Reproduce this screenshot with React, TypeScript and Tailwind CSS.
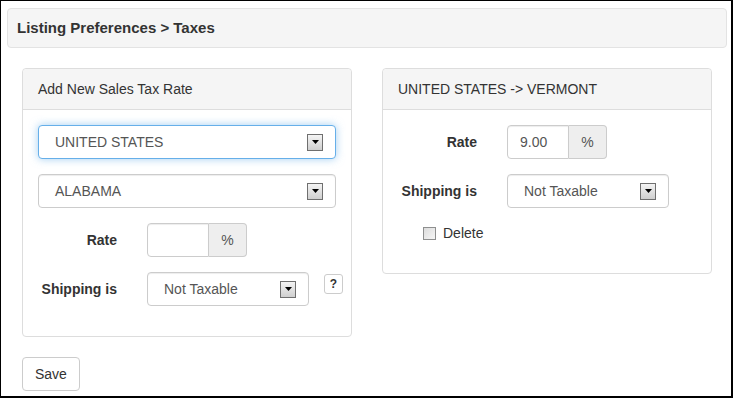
import React from 'react';

function ArrowBox() {
  return (
    <span className="flex h-[17px] w-[16px] items-center justify-center border border-[#6f6f6f] bg-gradient-to-b from-[#f4f4f4] to-[#cfcfcf]">
      <svg width="7" height="4" viewBox="0 0 7 4">
        <path d="M0 0 L7 0 L3.5 4 Z" fill="#000" />
      </svg>
    </span>
  );
}

interface SelectBoxProps {
  value: string;
  focused?: boolean;
  className?: string;
}

function SelectBox({ value, focused, className = '' }: SelectBoxProps) {
  return (
    <div
      className={`flex h-[34px] shrink-0 items-center justify-between rounded-[4px] border bg-white pl-[16px] pr-[12px] text-[14px] text-[#555] ${
        focused
          ? 'border-[#66afe9] shadow-[0_0_8px_rgba(102,175,233,0.6)]'
          : 'border-[#ccc] shadow-[inset_0_1px_1px_rgba(0,0,0,0.075)]'
      } ${className}`}
    >
      <span>{value}</span>
      <ArrowBox />
    </div>
  );
}

function RateInput({ value }: { value: string }) {
  return (
    <div className="flex h-[34px] w-[100px] shrink-0 text-[14px]">
      <div className="flex w-[62px] items-center rounded-l-[4px] border border-[#ccc] bg-white px-[12px] text-[#555] shadow-[inset_0_1px_1px_rgba(0,0,0,0.075)]">
        {value}
      </div>
      <div className="flex w-[38px] items-center justify-center rounded-r-[4px] border border-l-0 border-[#ccc] bg-[#eee] text-[#555]">
        %
      </div>
    </div>
  );
}

function FormRow({ label, children }: { label: string; children: React.ReactNode }) {
  return (
    <div className="flex items-start gap-[30px]">
      <label className="flex h-[34px] w-[79px] shrink-0 items-center justify-end whitespace-nowrap font-bold text-[#333]">
        {label}
      </label>
      {children}
    </div>
  );
}

export default function App() {
  return (
    <div className="h-[398px] w-[733px] overflow-hidden border border-r-2 border-b-2 border-black bg-white font-['Liberation_Sans',Arial,sans-serif] text-[14px] leading-[20px] text-[#333]">
      <div className="ml-[6px] mt-[7px] w-[720px] rounded-[4px] border border-[#e3e3e3] bg-[#f5f5f5] px-[9px] py-[9px] text-[15px] font-bold">
        Listing Preferences &gt; Taxes
      </div>

      <div className="mt-[20px] grid grid-cols-[330px_330px] gap-[30px] pl-[21px]">
        <div className="self-start rounded-[4px] border border-[#ddd]">
          <div className="rounded-t-[4px] border-b border-[#ddd] bg-[#f5f5f5] px-[15px] py-[10px]">
            Add New Sales Tax Rate
          </div>
          <div className="flex flex-col gap-[15px] px-[15px] pt-[15px] pb-[30px]">
            <SelectBox value="UNITED STATES" focused />
            <SelectBox value="ALABAMA" />
            <FormRow label="Rate">
              <RateInput value="" />
            </FormRow>
            <FormRow label="Shipping is">
              <div className="flex shrink-0 items-start gap-[15px]">
                <SelectBox value="Not Taxable" className="w-[162px]" />
                <button className="mt-[2px] flex h-[20px] w-[19px] items-center justify-center rounded-[3px] border border-[#ccc] bg-white text-[12px] font-bold text-[#333]">
                  ?
                </button>
              </div>
            </FormRow>
          </div>
        </div>

        <div className="self-start rounded-[4px] border border-[#ddd]">
          <div className="rounded-t-[4px] border-b border-[#ddd] bg-[#f5f5f5] px-[15px] py-[10px]">
            UNITED STATES -&gt; VERMONT
          </div>
          <div className="flex flex-col gap-[15px] px-[15px] pt-[15px] pb-[30px]">
            <FormRow label="Rate">
              <RateInput value="9.00" />
            </FormRow>
            <FormRow label="Shipping is">
              <SelectBox value="Not Taxable" className="w-[162px]" />
            </FormRow>
            <label className="ml-[25px] flex h-[20px] items-center gap-[7px]">
              <span className="h-[13px] w-[13px] border border-[#8e8f8f] bg-gradient-to-br from-[#dcdcdc] to-[#f6f6f6]" />
              <span>Delete</span>
            </label>
          </div>
        </div>
      </div>

      <button className="ml-[21px] mt-[20px] block h-[34px] rounded-[4px] border border-[#ccc] bg-white px-[12px] text-[14px] text-[#333]">
        Save
      </button>
    </div>
  );
}
